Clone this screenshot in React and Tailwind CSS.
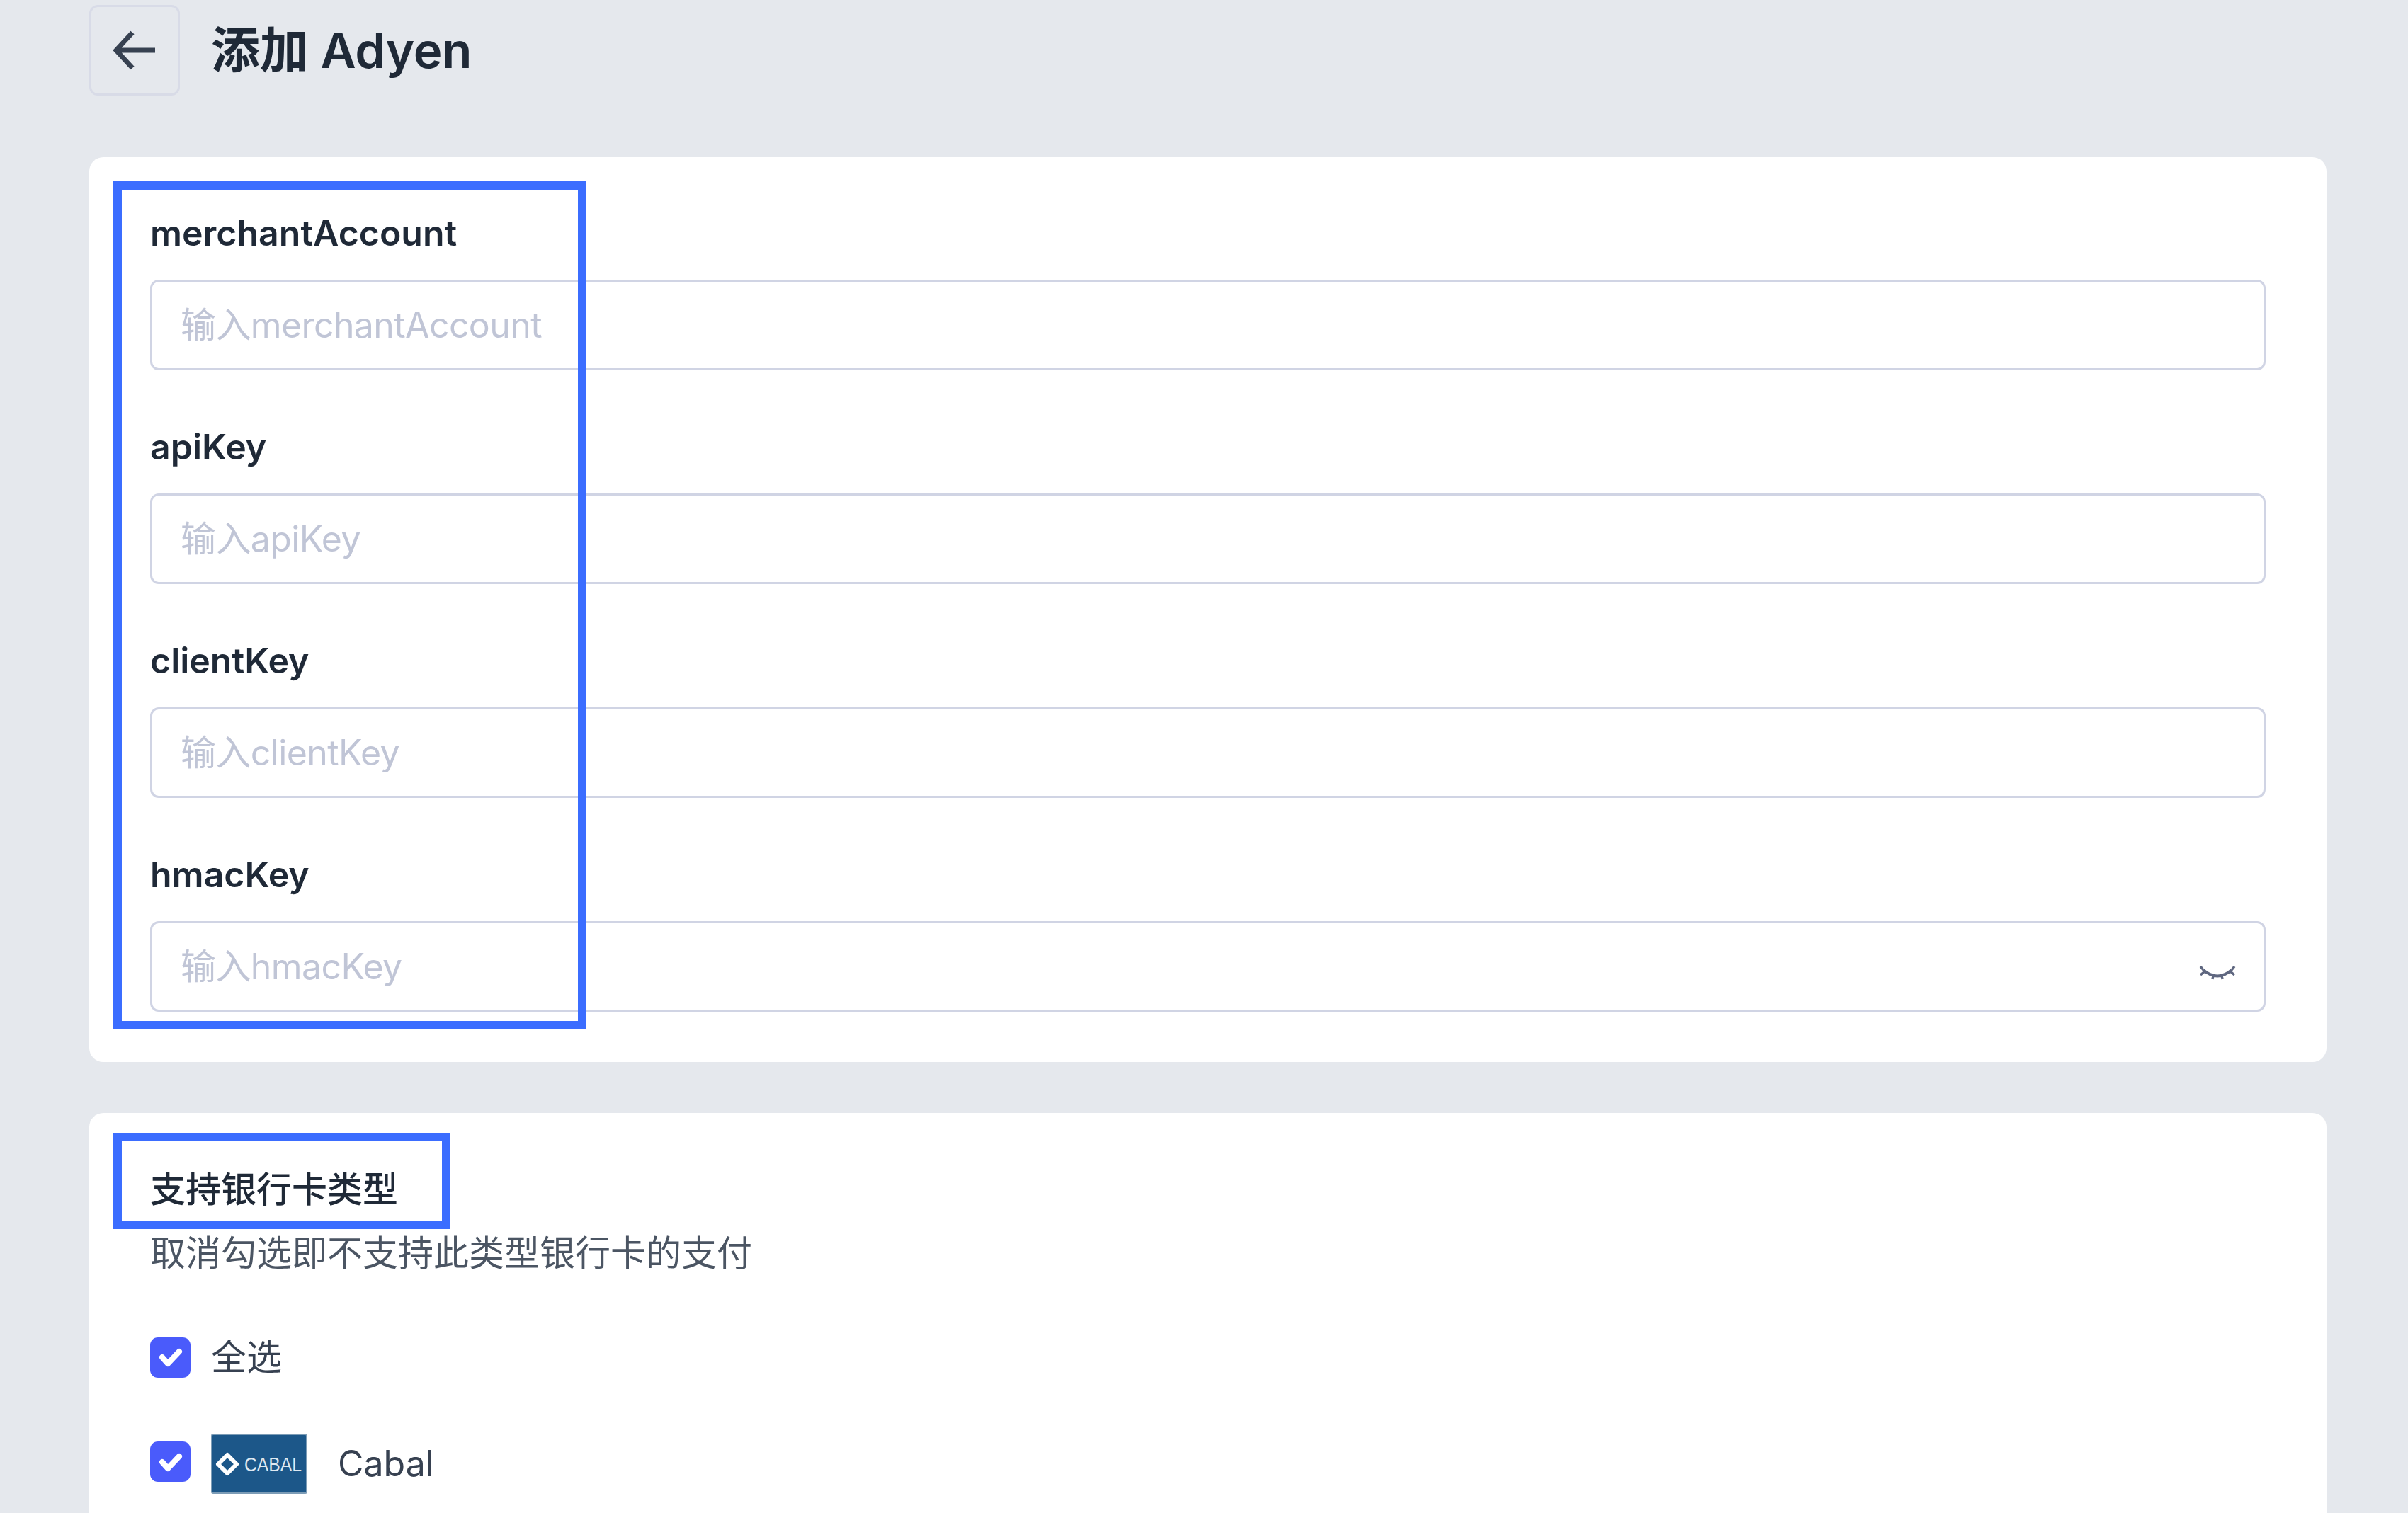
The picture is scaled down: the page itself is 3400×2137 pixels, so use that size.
const FONT = "font-['Inter','Noto_Sans_CJK_SC',sans-serif]";

function Field({ label, placeholder, eye }) {
  return (
    <div className="flex flex-col">
      <label className="h-[72px] mb-[30px] text-[50px] leading-[72px] font-semibold text-[#1f2937]">{label}</label>
      <div className="relative">
        <input
          readOnly
          placeholder={placeholder}
          className="block w-full h-[128px] rounded-[12px] border-[3px] border-[#d0d4e4] bg-white px-[40px] text-[50px] tracking-[-0.6px] outline-none placeholder:text-[#c0c5d6]"
        />
        {eye && (
          <svg className="absolute right-[41px] top-[62px]" width="54" height="24" viewBox="0 0 54 24" fill="none" stroke="#5f6780" strokeWidth="3.5">
            <path d="M7 7 Q27 24 47 7" strokeWidth="4" />
            <path d="M7 7 L3 2 M9 9 L3 14 M21 15 L20 20 M33 15 L34 20 M45 9 L51 14 M47 7 L51 2" strokeWidth="3.5" />
          </svg>
        )}
      </div>
    </div>
  );
}

function Check() {
  return (
    <span className="flex items-center justify-center w-[57px] h-[57px] shrink-0 rounded-[11px] bg-[#4a5bfb]">
      <svg width="34" height="30" viewBox="0 0 34 30" fill="none" stroke="#ffffff" strokeWidth="8" strokeLinecap="round" strokeLinejoin="round">
        <path d="M5 15 L13 24 L29 7" />
      </svg>
    </span>
  );
}

function CabalLogo() {
  return (
    <svg className="block" width="136" height="85" viewBox="0 0 136 85">
      <rect x="1" y="1" width="134" height="83" rx="2" fill="#1c5789" stroke="#7c9cb6" strokeWidth="2" />
      <path d="M23 30 L36 43 L23 56 L10 43 Z" fill="none" stroke="#ffffff" strokeWidth="6" strokeLinejoin="round" />
      <text x="47" y="53" fontFamily="'Liberation Sans', sans-serif" fontSize="28" fill="#dfe9f1" textLength="81" lengthAdjust="spacingAndGlyphs">CABAL</text>
    </svg>
  );
}

export default function App() {
  return (
    <div className={`${FONT} flex flex-col h-[2137px] overflow-hidden bg-[#e5e8ed] pl-[126px] pr-[115px] pt-[7px]`}>
      <header className="flex items-center gap-[44px] h-[128px] shrink-0">
        <button className="flex items-center justify-center w-[128px] h-[128px] rounded-[12px] border-[3px] border-[#d8dbe7]">
          <svg width="60" height="56" viewBox="0 0 60 56" fill="none" stroke="#374151" strokeWidth="7">
            <path d="M27 3 L4 28 L27 53 M4 28 H59" />
          </svg>
        </button>
        <h1 className="text-[69px] leading-none font-semibold tracking-[-0.3px] text-[#1f2937]">添加 Adyen</h1>
      </header>

      <section className="relative mt-[87px] shrink-0 flex flex-col gap-[72px] rounded-[20px] bg-white px-[86px] pt-[71px] pb-[71px]">
        <Field label="merchantAccount" placeholder="输入merchantAccount" />
        <Field label="apiKey" placeholder="输入apiKey" />
        <Field label="clientKey" placeholder="输入clientKey" />
        <Field label="hmacKey" placeholder="输入hmacKey" eye />
        <div className="absolute left-[34px] top-[34px] w-[668px] h-[1198px] border-[12px] border-[#3b6dff]" />
      </section>

      <section className="relative mt-[72px] flex-1 rounded-t-[20px] bg-white px-[86px] pt-[72px]">
        <h2 className="h-[72px] text-[50px] leading-[72px] font-medium text-[#1f2937]">支持银行卡类型</h2>
        <p className="mt-[18px] h-[72px] text-[50px] leading-[72px] text-[#4b5563]">取消勾选即不支持此类型银行卡的支付</p>
        <div className="mt-[82px] flex items-center gap-[29px] h-[58px]">
          <Check />
          <span className="text-[50px] text-[#374151]">全选</span>
        </div>
        <div className="mt-[79px] flex items-start">
          <span className="mt-[11px]"><Check /></span>
          <span className="ml-[29px]"><CabalLogo /></span>
          <span className="ml-[43px] self-center text-[50px] text-[#374151]">Cabal</span>
        </div>
        <div className="absolute left-[34px] top-[28px] w-[476px] h-[136px] border-[12px] border-[#3b6dff]" />
      </section>
    </div>
  );
}
